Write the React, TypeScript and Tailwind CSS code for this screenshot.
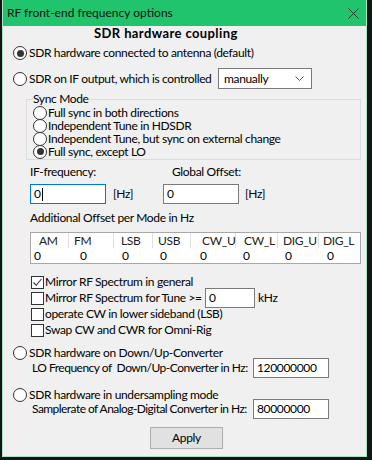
import React from 'react';

function Radio({ checked }: { checked?: boolean }) {
  return (
    <span className="flex h-[14px] w-[14px] shrink-0 items-center justify-center rounded-full border border-[#333333] bg-white">
      {checked && <span className="h-[7px] w-[7px] rounded-full bg-[#333333]" />}
    </span>
  );
}

function Check({ checked }: { checked?: boolean }) {
  return (
    <span className="flex h-[13px] w-[13px] shrink-0 items-center justify-center border border-[#333333] bg-white">
      {checked && (
        <svg width="11" height="11" viewBox="0 0 11 11">
          <path d="M1.5 5.5 L4.2 8.3 L9.5 2" fill="none" stroke="#333333" strokeWidth="1.1" />
        </svg>
      )}
    </span>
  );
}

function TextBox({ value, className = '', focused }: { value: string; className?: string; focused?: boolean }) {
  return (
    <div
      className={`flex h-[20px] shrink-0 items-center border bg-white pl-[3px] ${
        focused ? 'border-[#0078d7]' : 'border-[#7a7a7a]'
      } ${className}`}
    >
      <span>{value}</span>
      {focused && <span className="ml-[1px] h-[13px] w-[1px] bg-black" />}
    </div>
  );
}

const headers = [
  { name: 'AM', w: 'w-[38px]', pl: 'pl-[8px]' },
  { name: 'FM', w: 'w-[45px]', pl: 'pl-[5px]' },
  { name: 'LSB', w: 'w-[39px]', pl: 'pl-[7px]' },
  { name: 'USB', w: 'w-[38px]', pl: 'pl-[5px]' },
  { name: 'CW_U', w: 'w-[45px]', pl: 'pl-[11px]' },
  { name: 'CW_L', w: 'w-[42px]', pl: 'pl-[8px]' },
  { name: 'DIG_U', w: 'w-[41px]', pl: 'pl-[5px]' },
  { name: 'DIG_L', w: 'flex-1', pl: 'pl-[4px]' },
];

const cells = ['w-[46px]', 'w-[42px]', 'w-[38px]', 'w-[40px]', 'w-[43px]', 'w-[42px]', 'w-[42px]', 'flex-1'];

export default function App() {
  return (
    <div className="h-[460px] w-[372px] whitespace-nowrap bg-[#141414] pb-[3px] pl-[2px] pr-[5px] font-['Lato',sans-serif] text-[12px] tracking-[-0.35px] text-black">
      <div className="flex h-full flex-col border-x border-b border-[#a6e6c2]">
        {/* Title bar */}
        <div className="flex h-[26px] shrink-0 items-center justify-between bg-[#1fc46c] pl-[4px] pr-[7px]">
          <span className="text-[12px] tracking-normal text-[#111]">RF front-end frequency options</span>
          <svg width="11" height="11" viewBox="0 0 11 11">
            <path d="M0.5 0.5 L10.5 10.5 M10.5 0.5 L0.5 10.5" stroke="#1e3a2a" strokeWidth="1" />
          </svg>
        </div>

        <div className="flex flex-1 flex-col bg-[#f0f0f0] leading-[14px]">
          <div className="h-[15px] pl-[91px] text-[13px] font-bold leading-[15px] tracking-[0.4px]">SDR hardware coupling</div>

          <div className="mt-[4px] flex h-[16px] items-center gap-[2px] pl-[10px]">
            <Radio checked />
            <span>SDR hardware connected to antenna (default)</span>
          </div>

          <div className="mt-[7px] flex h-[21px] items-center pl-[10px]">
            <Radio />
            <span className="ml-[2px] w-[189px]">SDR on IF output, which is controlled</span>
            <div className="flex h-[21px] w-[94px] items-center justify-between border border-[#7a7a7a] bg-white pl-[5px] pr-[7px]">
              <span>manually</span>
              <svg width="9" height="5" viewBox="0 0 9 5">
                <path d="M0.5 0.5 L4.5 4.5 L8.5 0.5" fill="none" stroke="#555" strokeWidth="1" />
              </svg>
            </div>
          </div>

          <fieldset className="ml-[23px] mt-[3px] w-[335px] border border-[#dcdcdc] pb-[1px] pl-[6px]">
            <legend className="leading-[14px]">Sync Mode</legend>
            {[
              'Full sync in both directions',
              'Independent Tune in HDSDR',
              'Independent Tune, but sync on external change',
              'Full sync, except LO',
            ].map((t, i) => (
              <div key={t} className="flex h-[13px] items-center gap-[1px] leading-[13px]">
                <Radio checked={i === 3} />
                <span>{t}</span>
              </div>
            ))}
          </fieldset>

          <div className="mt-[5px] flex h-[14px] items-center pl-[27px]">
            <span className="w-[142px]">IF-frequency:</span>
            <span>Global Offset:</span>
          </div>

          <div className="mt-[5px] flex h-[20px] items-center pl-[27px]">
            <TextBox value="0" focused className="w-[76px]" />
            <span className="ml-[7px] w-[50px]">[Hz]</span>
            <TextBox value="0" className="w-[76px]" />
            <span className="ml-[6px]">[Hz]</span>
          </div>

          <div className="mt-[7px] flex h-[14px] items-center pl-[27px]">Additional Offset per Mode in Hz</div>

          <div className="ml-[27px] mt-[7px] w-[331px] border border-[#a8a8a8] bg-white">
            <div className="flex h-[15px] items-center">
              {headers.map((h, i) => (
                <span
                  key={h.name}
                  className={`flex h-full items-center ${h.w} ${h.pl} text-[#222] ${
                    i < headers.length - 1 ? 'border-r border-[#e0e0e0]' : ''
                  }`}
                >
                  {h.name}
                </span>
              ))}
            </div>
            <div className="flex h-[15px] items-center pl-[3px]">
              {cells.map((c, i) => (
                <span key={i} className={c}>
                  0
                </span>
              ))}
            </div>
          </div>

          <div className="mt-[10px] flex h-[16px] items-center gap-[1px] pl-[28px]">
            <Check checked />
            <span>Mirror RF Spectrum in general</span>
          </div>
          <div className="flex h-[16px] items-center pl-[28px]">
            <Check />
            <span className="ml-[1px] w-[160px]">Mirror RF Spectrum for Tune &gt;=</span>
            <TextBox value="0" className="h-[18px] w-[50px]" />
            <span className="ml-[3px]">kHz</span>
          </div>
          <div className="flex h-[16px] items-center gap-[1px] pl-[28px]">
            <Check />
            <span>operate CW in lower sideband (LSB)</span>
          </div>
          <div className="flex h-[16px] items-center gap-[1px] pl-[28px]">
            <Check />
            <span>Swap CW and CWR for Omni-Rig</span>
          </div>

          <div className="mt-[9px] flex h-[12px] items-center gap-[2px] pl-[10px]">
            <Radio />
            <span>SDR hardware on Down/Up-Converter</span>
          </div>
          <div className="-mt-[1px] flex h-[20px] items-center pl-[29px]">
            <span className="w-[221px] tracking-[-0.5px]">LO Frequency of&nbsp; Down/Up-Converter in Hz:</span>
            <TextBox value="120000000" className="w-[76px]" />
          </div>

          <div className="mt-[11px] flex h-[12px] items-center gap-[2px] pl-[10px]">
            <Radio />
            <span>SDR hardware in undersampling mode</span>
          </div>
          <div className="-mt-[2px] flex h-[20px] items-center pl-[29px]">
            <span className="w-[221px] tracking-[-0.55px]">Samplerate of Analog-Digital Converter in Hz:</span>
            <TextBox value="80000000" className="w-[76px]" />
          </div>

          <div className="ml-[147px] mt-[8px] flex h-[22px] w-[73px] items-center justify-center border border-[#adadad] bg-[#e1e1e1]">
            Apply
          </div>
        </div>
      </div>
    </div>
  );
}
